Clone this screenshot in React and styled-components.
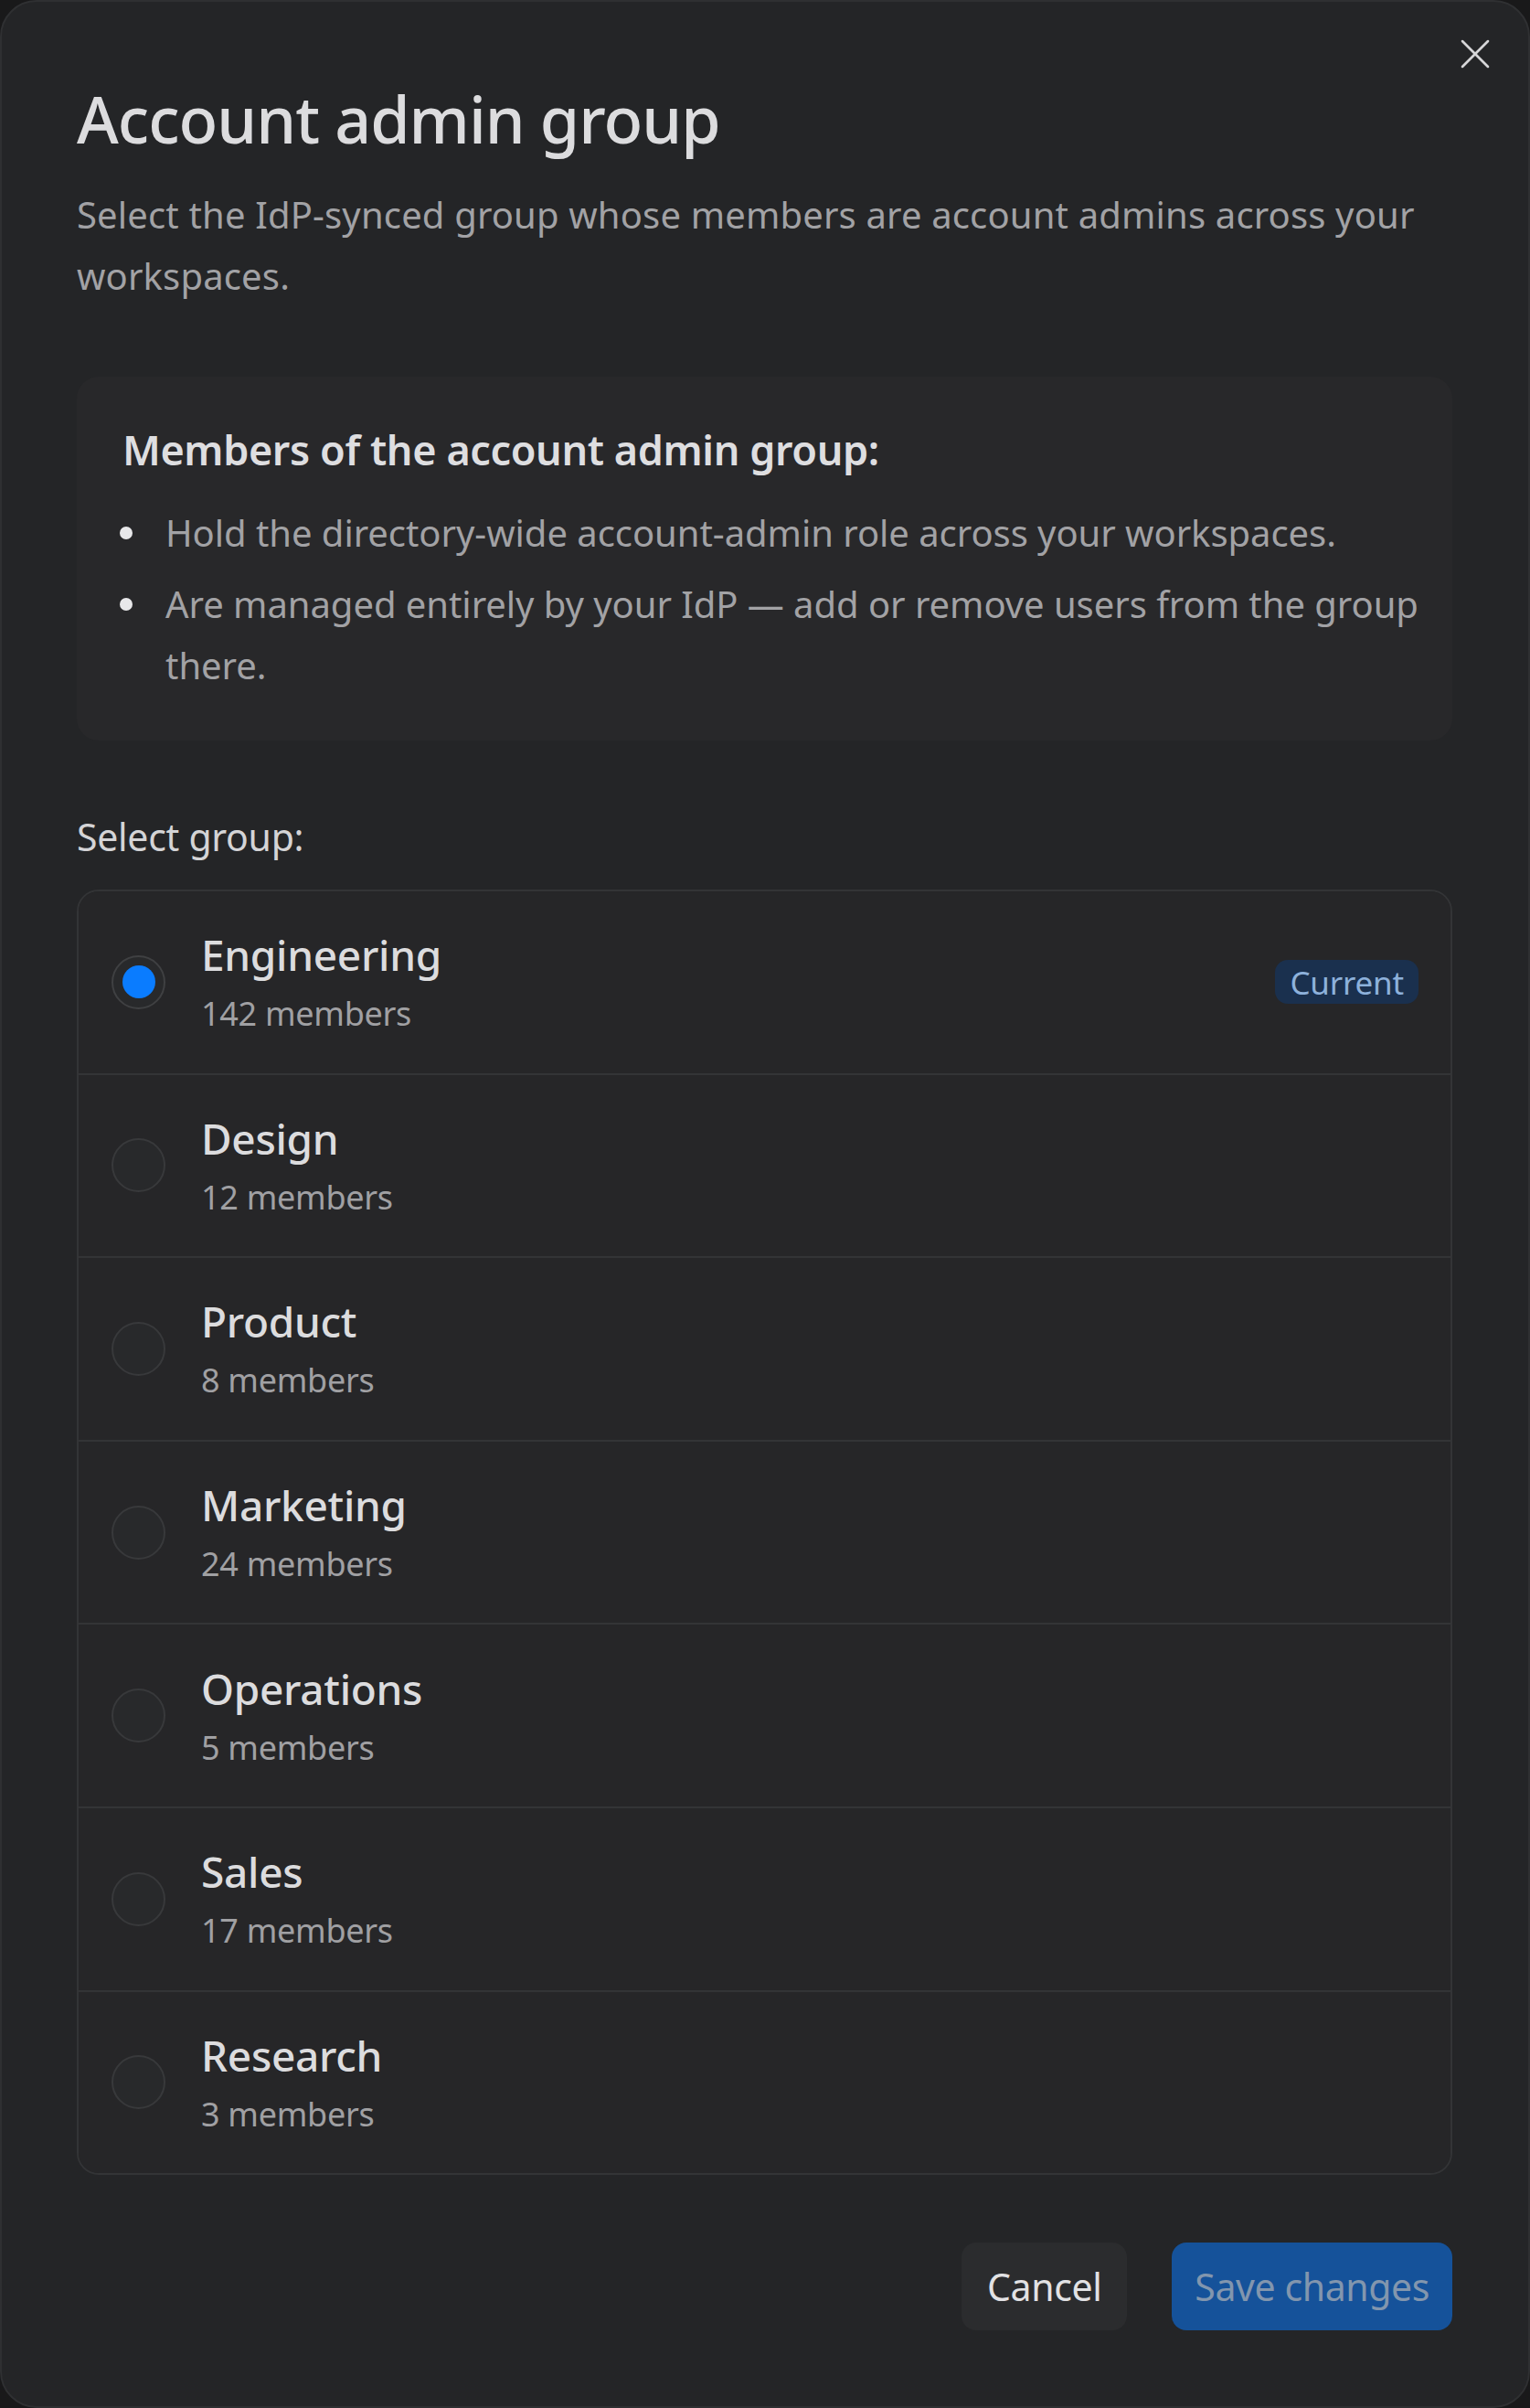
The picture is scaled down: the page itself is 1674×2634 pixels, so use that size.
import styled, { createGlobalStyle } from 'styled-components';
import { X } from 'lucide-react';

const GlobalStyle = createGlobalStyle`
	html, body {
		margin: 0;
		padding: 0;
		background: #19191a;
	}
	* {
		box-sizing: border-box;
	}
`;

const Dialog = styled.div`
	position: relative;
	width: 1674px;
	min-height: 2634px;
	padding: 84px 83px 83px 82px;
	background: #242527;
	border: 2px solid #2f3032;
	border-radius: 40px;
	font-family: "Noto Sans", "Open Sans", sans-serif;
	color: #dcdcde;
`;

const CloseButton = styled.button`
	position: absolute;
	top: 29px;
	right: 30px;
	display: flex;
	padding: 0;
	border: 0;
	background: none;
	color: #d6d6d8;
	cursor: pointer;
`;

const Title = styled.h1`
	margin: 0;
	font-size: 70px;
	line-height: 88px;
	font-weight: 500;
	color: #dcdcde;
	letter-spacing: -1px;
`;

const Description = styled.p`
	margin: 27px 0 0;
	font-size: 40px;
	line-height: 67px;
	color: #a2a2a5;
	letter-spacing: 0.15px;
`;

const InfoPanel = styled.div`
	margin-top: 77px;
	padding: 50px 34px 49px 50px;
	background: #28282a;
	border-radius: 24px;
`;

const InfoHeading = styled.h2`
	margin: 0;
	font-size: 45px;
	line-height: 60px;
	font-weight: 600;
	color: #dedee0;
	letter-spacing: -0.4px;
`;

const BulletList = styled.ul`
	list-style: none;
	margin: 27px 0 0;
	padding: 0;
	display: flex;
	flex-direction: column;
	gap: 11px;
`;

const BulletItem = styled.li`
	display: flex;
	font-size: 40px;
	line-height: 67px;
	color: #a2a2a5;
	letter-spacing: -0.05px;
`;

const Dot = styled.span`
	flex: none;
	width: 14px;
	height: 14px;
	margin: 27px 36px 0 -3px;
	border-radius: 50%;
	background: #e8e8ea;
`;

const SelectLabel = styled.div`
	margin-top: 77px;
	font-size: 41px;
	line-height: 56px;
	color: #d4d4d6;
	letter-spacing: -0.3px;
`;

const GroupList = styled.div`
	margin-top: 30px;
	border: 2px solid #333436;
	border-radius: 24px;
	overflow: hidden;
`;

const GroupRow = styled.label`
	display: flex;
	align-items: center;
	height: 198.6px;
	padding: 0 35px 0 36px;
	background: #262628;
	cursor: pointer;
	& + & {
		border-top: 2px solid #333436;
		height: 200.6px;
	}
`;

const Radio = styled.span`
	flex: none;
	display: flex;
	align-items: center;
	justify-content: center;
	width: 59px;
	height: 59px;
	border-radius: 50%;
	border: 2.5px solid ${props => (props.checked ? '#3f4042' : '#38393b')};
	background: #28292b;

	&::after {
		content: '';
		display: ${props => (props.checked ? 'block' : 'none')};
		width: 36px;
		height: 36px;
		border-radius: 50%;
		background: #0a7cff;
	}
`;

const GroupText = styled.div`
	flex: 1;
	margin-left: 39px;
	display: flex;
	flex-direction: column;
	gap: 12px;
`;

const GroupName = styled.div`
	font-size: 46px;
	line-height: 58px;
	font-weight: 500;
	color: #dcdcde;
	letter-spacing: -0.3px;
`;

const MemberCount = styled.div`
	font-size: 36px;
	line-height: 48px;
	color: #a0a0a3;
	letter-spacing: -0.3px;
`;

const Badge = styled.span`
	flex: none;
	display: flex;
	align-items: center;
	height: 48px;
	padding: 0 16px;
	border-radius: 14px;
	background: #1a304e;
	color: #8db1db;
	font-size: 35px;
	letter-spacing: -0.2px;
`;

const Footer = styled.div`
	margin-top: 74px;
	display: flex;
	justify-content: flex-end;
	gap: 49px;
`;

const Button = styled.button`
	height: 96px;
	padding: 0 ${props => (props.primary ? '25px' : '28px')};
	border: 0;
	border-radius: 16px;
	font-family: inherit;
	font-size: 41px;
	letter-spacing: -0.4px;
	background: ${props => (props.primary ? '#15529a' : '#2b2c2e')};
	color: ${props => (props.primary ? '#8296ae' : '#e2e2e4')};
	cursor: pointer;
`;

const groups = [
	{ name: 'Engineering', members: 142, current: true },
	{ name: 'Design', members: 12 },
	{ name: 'Product', members: 8 },
	{ name: 'Marketing', members: 24 },
	{ name: 'Operations', members: 5 },
	{ name: 'Sales', members: 17 },
	{ name: 'Research', members: 3 },
];

export default function App () {
	return (
		<>
			<GlobalStyle />
			<Dialog>
				<CloseButton aria-label="Close">
					<X size={56} strokeWidth={1.1} />
				</CloseButton>
				<Title>Account admin group</Title>
				<Description>
					Select the IdP-synced group whose members are account admins across your workspaces.
				</Description>

				<InfoPanel>
					<InfoHeading>Members of the account admin group:</InfoHeading>
					<BulletList>
						<BulletItem>
							<Dot />
							<span>Hold the directory-wide account-admin role across your workspaces.</span>
						</BulletItem>
						<BulletItem>
							<Dot />
							<span>Are managed entirely by your IdP — add or remove users from the group there.</span>
						</BulletItem>
					</BulletList>
				</InfoPanel>

				<SelectLabel>Select group:</SelectLabel>
				<GroupList>
					{groups.map(group => (
						<GroupRow key={group.name}>
							<Radio checked={group.current} />
							<GroupText>
								<GroupName>{group.name}</GroupName>
								<MemberCount>{group.members} members</MemberCount>
							</GroupText>
							{group.current && <Badge>Current</Badge>}
						</GroupRow>
					))}
				</GroupList>

				<Footer>
					<Button>Cancel</Button>
					<Button primary>Save changes</Button>
				</Footer>
			</Dialog>
		</>
	);
}
